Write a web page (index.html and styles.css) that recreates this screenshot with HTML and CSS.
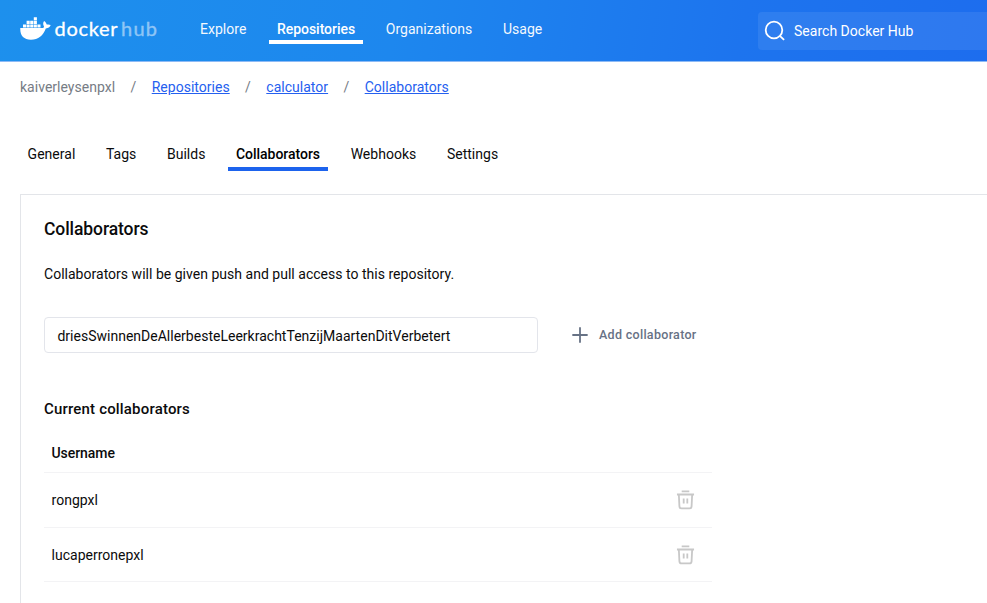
FILE: index.html
```html
<!DOCTYPE html>
<html lang="en">
<head>
<meta charset="utf-8">
<title>Collaborators | Docker Hub</title>
<link rel="stylesheet" href="styles.css">
</head>
<body>
<header class="topbar">
  <svg class="logo" width="140" height="28" viewBox="0 0 140 28" role="img" aria-label="docker hub">
    <path fill="#fff" d="M.3 11H22C23.6 10.9 24.1 10.3 23.9 9.2C22.9 7.7 22.9 5.4 24.1 3.9C25.6 4.9 26.5 6.1 26.7 7.6C28.1 7.2 29.7 7.4 30.7 8.1C29.8 10.3 28.3 11.2 25.8 11.4C23.1 18.6 18.4 22.7 10.9 22.7C3.7 22.7-.1 18.8.3 11Z"/>
    <path fill="#fff" d="M3 7.4h3.1v3.1h-3.1zM6.6 7.4h3.1v3.1h-3.1zM10.2 7.4h3.1v3.1h-3.1zM13.8 7.4h3.1v3.1h-3.1zM17.4 7.4h3.1v3.1h-3.1zM6.6 3.8h3.1v3.1h-3.1zM10.2 3.8h3.1v3.1h-3.1zM13.8 3.8h3.1v3.1h-3.1zM13.8.2h3.1v3.1h-3.1z"/>
    <text class="word" x="34.5" y="19.3" textLength="63" lengthAdjust="spacing">docker</text>
    <text class="word light" x="101" y="19.3" textLength="36" lengthAdjust="spacing">hub</text>
  </svg>
  <nav class="nav">
    <a>Explore</a><a class="active">Repositories</a><a>Organizations</a><a>Usage</a>
  </nav>
  <div class="search">
    <svg width="22" height="22" viewBox="0 0 22 22" fill="none" stroke="#fff" stroke-width="1.8"><circle cx="10" cy="10" r="8.3"/><path d="m15.8 15.8 4.3 4.1"/></svg>
    <span>Search Docker Hub</span>
  </div>
</header>
<div class="crumbs">
  <span>kaiverleysenpxl</span><span>/</span><a>Repositories</a><span>/</span><a>calculator</a><span>/</span><a>Collaborators</a>
</div>
<nav class="tabs">
  <a>General</a><a>Tags</a><a>Builds</a><a class="active">Collaborators</a><a>Webhooks</a><a>Settings</a>
</nav>
<main class="panel">
  <h1>Collaborators</h1>
  <p class="intro">Collaborators will be given push and pull access to this repository.</p>
  <div class="form">
    <div class="field">driesSwinnenDeAllerbesteLeerkrachtTenzijMaartenDitVerbetert</div>
    <div class="add">
      <svg width="16" height="16" viewBox="0 0 16 16" stroke="#677285" stroke-width="1.8" stroke-linecap="round"><path d="M8 1v14M1 8h14"/></svg>
      <span>Add collaborator</span>
    </div>
  </div>
  <h2>Current collaborators</h2>
  <div class="table">
    <div class="row head">Username</div>
    <div class="row"><span>rongpxl</span>
      <svg class="trash" viewBox="0 0 20 20"><path d="M6 1h8M1 4.2h18M3 4.5l.6 12.2q.2 2.2 2.3 2.2h8.2q2.1 0 2.3-2.2L17 4.5M8.1 8.5v5.2M11.9 8.5v5.2"/></svg>
    </div>
    <div class="row"><span>lucaperronepxl</span>
      <svg class="trash" viewBox="0 0 20 20"><path d="M6 1h8M1 4.2h18M3 4.5l.6 12.2q.2 2.2 2.3 2.2h8.2q2.1 0 2.3-2.2L17 4.5M8.1 8.5v5.2M11.9 8.5v5.2"/></svg>
    </div>
  </div>
</main>
</body>
</html>
```
FILE: styles.css
```css
* { box-sizing: border-box; }
body {
  display: flex;
  flex-direction: column;
  margin: 0;
  height: 603px;
  background: #fff;
  color: #0b0b0c;
  font: 14px/20px Roboto, sans-serif;
  letter-spacing: 0.02px;
}
.topbar {
  display: flex;
  flex: none;
  height: 62px;
  padding-left: 20px;
  border-bottom: 1px solid #8dbaf5;
  background: linear-gradient(100deg, #1d90ed 0%, #1d87ee 40%, #1d74ee 75%, #1d6dee 100%);
  color: #fff;
}
.logo { display: block; flex: none; margin-top: 17px; }
.word { fill: #fff; stroke: #fff; stroke-width: 0.3px; font: 20px Lato, sans-serif; letter-spacing: 0; }
.light { opacity: 0.5; }
.nav { display: flex; gap: 14.6px; margin: 19px 0 0 32px; height: 25px; }
.nav a { padding: 0 8px; opacity: 0.95; }
.nav .active {
  border-bottom: 4px solid #fff;
  font-weight: 500;
  letter-spacing: -0.03px;
  opacity: 1;
}
.search {
  display: flex;
  align-items: center;
  width: 229px;
  height: 38px;
  margin: 12px 0 0 auto;
  padding-left: 6px;
  border-radius: 4px 0 0 4px;
  background: rgba(255, 255, 255, 0.08);
}
.search span { margin-left: 8px; }
.crumbs {
  display: flex;
  gap: 15.4px;
  margin: 15px 0 0 20px;
  color: #767c85;
}
.crumbs a { color: #2560ef; text-decoration: underline; }
.tabs {
  display: flex;
  flex: none;
  gap: 14.6px;
  height: 27px;
  margin: 47px 0 0 20px;
}
.tabs a { padding: 0 8px; }
.tabs a:first-child { padding-left: 7.6px; }
.tabs .active {
  border-bottom: 4px solid #1d63ed;
  color: #000;
  font-weight: 500;
  letter-spacing: -0.03px;
}
.panel {
  flex: 1;
  margin: 23px 0 0 20px;
  padding: 22px 0 0 23px;
  border: 1px solid #e3e5e9;
  border-width: 1px 0 0 1px;
}
h1, h2, p { margin: 0; }
h1 { font-size: 17.5px; line-height: 24px; font-weight: 500; letter-spacing: -0.08px; }
.intro { margin-top: 23px; }
.form { display: flex; align-items: center; margin-top: 33px; }
.field {
  width: 494px;
  height: 36px;
  padding: 8px 12.4px;
  border: 1px solid #e3e5eb;
  border-radius: 4px;
  letter-spacing: 0.01px;
}
.add {
  display: flex;
  align-items: center;
  gap: 11px;
  margin-left: 34px;
  color: #677285;
  font-size: 12.5px;
  font-weight: 500;
  letter-spacing: 0.3px;
}
h2 { margin-top: 45px; font-size: 15px; line-height: 22px; font-weight: 500; letter-spacing: 0.18px; }
.table { width: 668px; margin-top: 13px; }
.row {
  display: flex;
  align-items: center;
  justify-content: space-between;
  height: 54.6px;
  padding: 0 17px 0 7.5px;
  border-bottom: 1px solid #f3f3f5;
}
.row:last-child { padding-top: 1px; }
.head { height: 40px; font-weight: 500; letter-spacing: -0.05px; }
.trash {
  width: 19px;
  height: 20px;
  fill: none;
  stroke: #c8c8c8;
  stroke-width: 1.9;
}
```
